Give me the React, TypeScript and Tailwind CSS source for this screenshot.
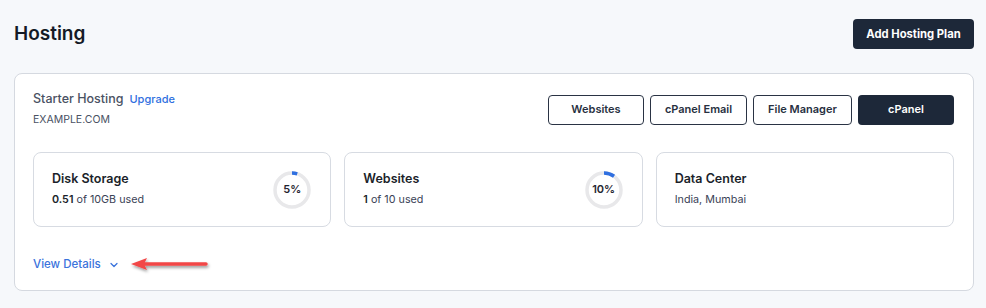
import { ChevronDown } from "lucide-react";

function Ring({ pct, label }: { pct: number; label: string }) {
    const r = 17;
    const c = 2 * Math.PI * r;
    return (
        <div className="relative w-[38px] h-[38px]">
            <svg width="38" height="38" viewBox="0 0 38 38" className="-rotate-90">
                <circle cx="19" cy="19" r={r} fill="none" stroke="#e8e8ea" strokeWidth="3.5" />
                <circle
                    cx="19"
                    cy="19"
                    r={r}
                    fill="none"
                    stroke="#2f6fe0"
                    strokeWidth="3.5"
                    strokeDasharray={`${(c * pct) / 100} ${c}`}
                />
            </svg>
            <span className="absolute inset-0 flex items-center justify-center text-[11px] font-semibold text-[#1f2430]">
                {label}
            </span>
        </div>
    );
}

function StatCard({
    title,
    children,
    ring,
}: {
    title: string;
    children: React.ReactNode;
    ring?: { pct: number; label: string };
}) {
    return (
        <div className="flex items-center justify-between h-[75px] rounded-lg border border-[#d7dbe2] bg-white pl-[18px] pr-[19px]">
            <div className="flex flex-col gap-[5px]">
                <div className="text-[12.5px] font-semibold text-[#1b1f2a] leading-4">{title}</div>
                <div className="text-[10.75px] text-[#3a4256] leading-4">{children}</div>
            </div>
            {ring && <Ring pct={ring.pct} label={ring.label} />}
        </div>
    );
}

function Arrow() {
    return (
        <svg width="84" height="20" viewBox="0 0 84 20" className="ml-[10px]">
            <defs>
                <filter id="sh" x="-20%" y="-50%" width="140%" height="220%">
                    <feDropShadow dx="1" dy="2" stdDeviation="1.5" floodColor="#000" floodOpacity="0.4" />
                </filter>
            </defs>
            <g filter="url(#sh)">
                <line x1="14" y1="9" x2="76" y2="9" stroke="#f24747" strokeWidth="3.5" strokeLinecap="round" />
                <path d="M1 9 L17 3 L14 9 L17 15 Z" fill="#f24747" />
            </g>
        </svg>
    );
}

export default function App() {
    const actions = [
        { label: "Websites", w: "w-[96px]" },
        { label: "cPanel Email", w: "w-[97px]" },
        { label: "File Manager", w: "w-[99px]" },
    ];
    return (
        <div className="min-h-[308px] bg-[#f6f8fb] pl-[14px] pr-[12px] pt-[19px] pb-4 font-['Inter',sans-serif]">
            <div className="flex items-center justify-between">
                <h1 className="text-[19px] font-semibold text-[#141a26] leading-[30px]">Hosting</h1>
                <button className="h-[30px] w-[121px] rounded-[4px] bg-[#1d2839] text-white text-[11.25px] font-bold">
                    Add Hosting Plan
                </button>
            </div>

            <div className="mt-[24px] rounded-lg border border-[#d5d9e0] bg-white pl-[18px] pr-[19px] pt-[17px] pb-[15px]">
                <div className="flex items-center justify-between">
                    <div>
                        <div className="flex items-baseline gap-[6px]">
                            <span className="text-[12.5px] font-medium text-[#4a5163] leading-4">Starter Hosting</span>
                            <a className="text-[11px] font-medium text-[#2f6fe0] leading-4">Upgrade</a>
                        </div>
                        <div className="mt-[5px] text-[10.5px] text-[#4a5163] leading-4">EXAMPLE.COM</div>
                    </div>
                    <div className="flex gap-[6px]">
                        {actions.map((a) => (
                            <button
                                key={a.label}
                                className={`${a.w} h-[30px] rounded-[4px] border border-[#2a3344] bg-white text-[11px] font-semibold text-[#273041]`}
                            >
                                {a.label}
                            </button>
                        ))}
                        <button className="w-[96px] h-[30px] rounded-[4px] bg-[#1d2839] text-white text-[11px] font-semibold">
                            cPanel
                        </button>
                    </div>
                </div>

                <div className="mt-[24px] grid grid-cols-3 gap-[13px]">
                    <StatCard title="Disk Storage" ring={{ pct: 5, label: "5%" }}>
                        <span className="font-semibold text-[#1b1f2a]">0.51</span> of 10GB used
                    </StatCard>
                    <StatCard title="Websites" ring={{ pct: 10, label: "10%" }}>
                        <span className="font-semibold text-[#1b1f2a]">1</span> of 10 used
                    </StatCard>
                    <StatCard title="Data Center">India, Mumbai</StatCard>
                </div>

                <div className="mt-[28px] flex items-center h-5">
                    <a className="text-[11.5px] font-medium text-[#3a73dc]">View Details</a>
                    <ChevronDown className="ml-[7px] w-[12px] h-[12px] text-[#3a73dc]" strokeWidth={2.5} />
                    <Arrow />
                </div>
            </div>
        </div>
    );
}
